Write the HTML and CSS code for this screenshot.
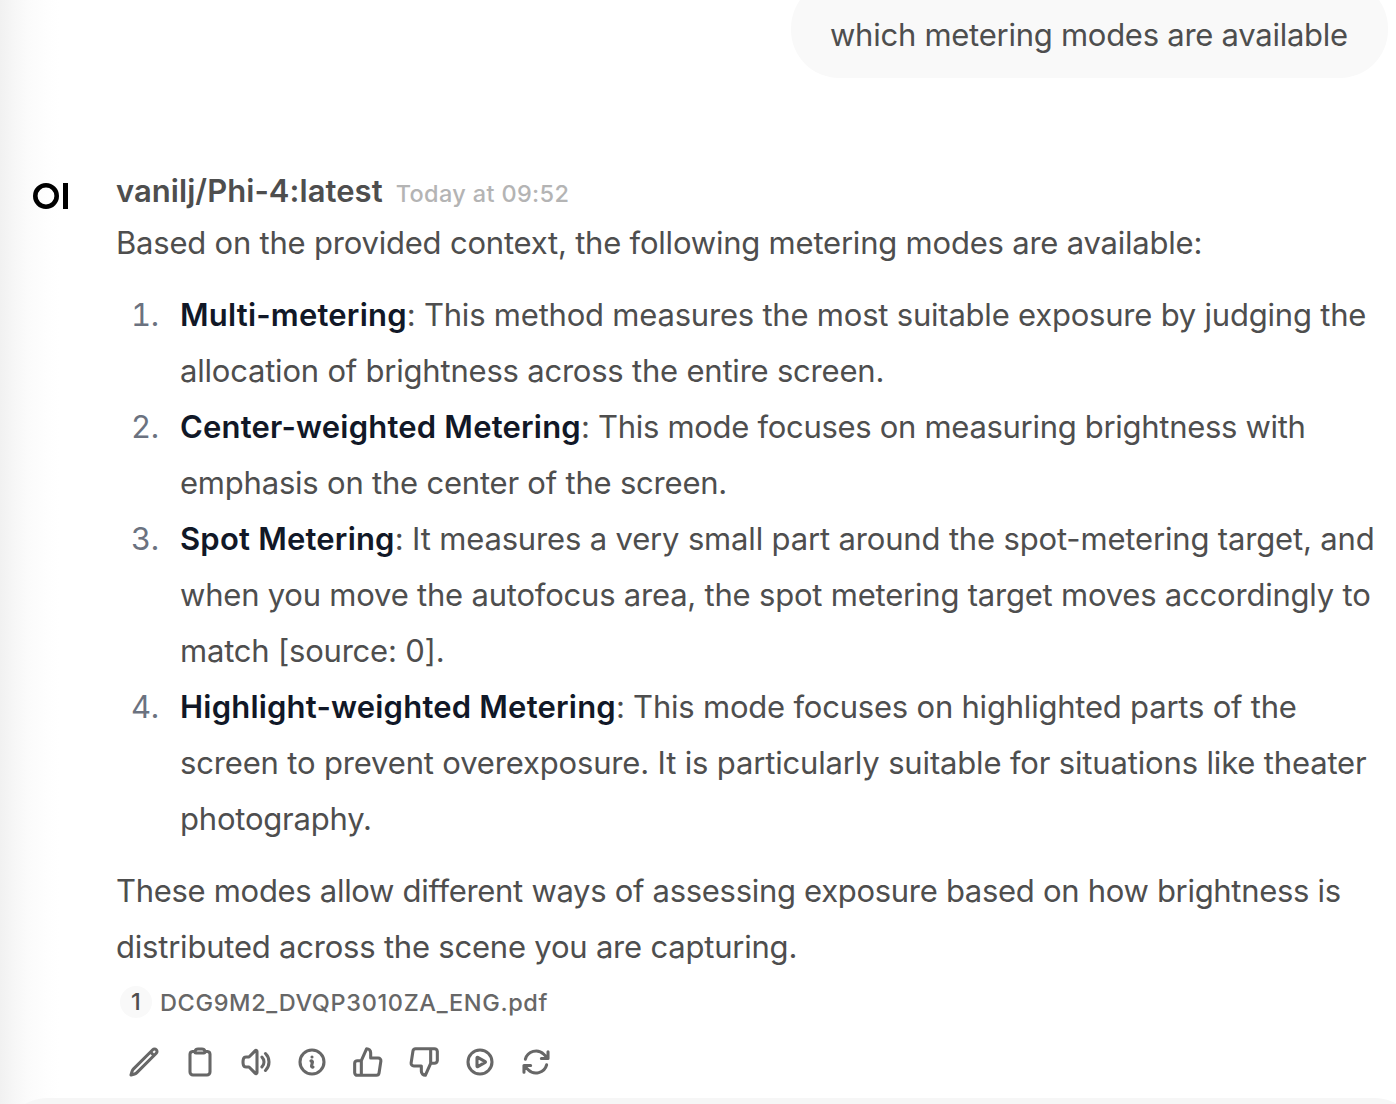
FILE: index.html
```
<!DOCTYPE html>
<html lang="en">
    <head>
        <meta charset="UTF-8">
        <meta name="viewport" content="width=device-width, initial-scale=1.0">
        <title>Chat</title>
        <link rel="stylesheet" href="styles.css">
    </head>

    <body>
        <div class="chat">
            <div class="user-message">
                <div class="bubble">which metering modes are available</div>
            </div>

            <div class="response">
                <svg class="avatar" viewBox="0 0 36 28">
                    <circle cx="13" cy="14" r="10.7" fill="none" stroke="#000" stroke-width="4.6"/>
                    <rect x="30" y="1" width="5" height="26"/>
                </svg>

                <div class="response-body">
                    <div class="response-header">
                        <span class="model-name">vanilj/Phi-4:latest</span>
                        <span class="time">Today at 09:52</span>
                    </div>

                    <div class="prose">
                        <p>Based on the provided context, the following metering modes are available:</p>
                        <ol>
                            <li><strong>Multi-metering</strong>: This method measures the most suitable exposure by judging the<br>allocation of brightness across the entire screen.</li>
                            <li><strong>Center-weighted Metering</strong><span class="tight">: This mode focuses on measuring brightness with</span><br>emphasis on the center of the screen.</li>
                            <li><strong>Spot Metering</strong><span class="loose">: It measures a very small part around the spot-metering target, and</span><br>when you move the autofocus area, the spot metering target moves accordingly to<br>match [source: 0].</li>
                            <li><strong>Highlight-weighted Metering</strong>: This mode focuses on highlighted parts of the<br><span class="loose">screen to prevent overexposure. It is particularly suitable for situations like theater</span><br>photography.</li>
                        </ol>
                        <p><span class="tight">These modes allow different ways of assessing exposure based on how brightness is</span><br>distributed across the scene you are capturing.</p>
                    </div>

                    <div class="citation">
                        <span class="citation-number">1</span>
                        <span class="citation-name">DCG9M2_DVQP3010ZA_ENG.pdf</span>
                    </div>

                    <div class="actions">
                        <!-- edit -->
                        <svg class="icon" viewBox="0 0 24 24"><path d="M16.862 4.487l1.687-1.688a1.875 1.875 0 112.652 2.652L6.832 19.82a4.5 4.5 0 01-1.897 1.13l-2.685.8.8-2.685a4.5 4.5 0 011.13-1.897L16.863 4.487zm0 0L19.5 7.125"/></svg>
                        <!-- copy -->
                        <svg class="icon" viewBox="0 0 24 24"><path d="M15.666 3.888A2.25 2.25 0 0013.5 2.25h-3c-1.03 0-1.9.693-2.166 1.638m7.332 0c.055.194.084.4.084.612v0a.75.75 0 01-.75.75H9a.75.75 0 01-.75-.75v0c0-.212.03-.418.084-.612m7.332 0c.646.049 1.288.11 1.927.184 1.1.128 1.907 1.077 1.907 2.185V19.5a2.25 2.25 0 01-2.25 2.25H6.75A2.25 2.25 0 014.5 19.5V6.257c0-1.108.806-2.057 1.907-2.185a48.208 48.208 0 011.927-.184"/></svg>
                        <!-- read aloud -->
                        <svg class="icon" viewBox="0 0 24 24"><path d="M19.114 5.636a9 9 0 010 12.728M16.463 8.288a5.25 5.25 0 010 7.424M6.75 8.25l4.72-4.72a.75.75 0 011.28.53v15.88a.75.75 0 01-1.28.53l-4.72-4.72H4.51c-.88 0-1.704-.507-1.938-1.354A9.01 9.01 0 012.25 12c0-.83.112-1.633.322-2.396C2.806 8.756 3.63 8.25 4.51 8.25H6.75z"/></svg>
                        <!-- info -->
                        <svg class="icon" viewBox="0 0 24 24"><path d="M11.25 11.25l.041-.02a.75.75 0 011.063.852l-.708 2.836a.75.75 0 001.063.853l.041-.021M21 12a9 9 0 11-18 0 9 9 0 0118 0zm-9-3.75h.008v.008H12V8.25z"/></svg>
                        <!-- good response -->
                        <svg class="icon" viewBox="0 0 24 24"><path d="M14 9V5a3 3 0 0 0-3-3l-4 9v11h11.28a2 2 0 0 0 2-1.7l1.38-9a2 2 0 0 0-2-2.3zM7 22H4a2 2 0 0 1-2-2v-7a2 2 0 0 1 2-2h3"/></svg>
                        <!-- bad response -->
                        <svg class="icon" viewBox="0 0 24 24"><path d="M10 15v4a3 3 0 0 0 3 3l4-9V2H5.72a2 2 0 0 0-2 1.7l-1.38 9a2 2 0 0 0 2 2.3zm7-13h2.67A2.31 2.31 0 0 1 22 4v7a2.31 2.31 0 0 1-2.33 2H17"/></svg>
                        <!-- continue -->
                        <svg class="icon" viewBox="0 0 24 24"><path d="M21 12a9 9 0 1 1-18 0 9 9 0 0 1 18 0Z"/><path d="M15.91 11.672a.375.375 0 0 1 0 .656l-5.603 3.113a.375.375 0 0 1-.557-.328V8.887c0-.286.307-.466.557-.327l5.603 3.112Z"/></svg>
                        <!-- regenerate -->
                        <svg class="icon" viewBox="0 0 24 24"><path d="M16.023 9.348h4.992v-.001M2.985 19.644v-4.992m0 0h4.992m-4.993 0l3.181 3.183a8.25 8.25 0 0013.803-3.7M4.031 9.865a8.25 8.25 0 0113.803-3.7l3.181 3.182m0-4.991v4.99"/></svg>
                    </div>
                </div>
            </div>

            <div class="message-input"></div>
        </div>
    </body>
</html>
```
FILE: styles.css
```
*{
    box-sizing: border-box;
}
body{
    margin: 0;
    background-color: #fff;
    color: #4e4e4e;
    font-family: Inter, "Liberation Sans", sans-serif;
    font-size: 31px;
}
.chat{
    display: flex;
    flex-direction: column;
    width: 1396px;
    height: 1104px;
    overflow: hidden;
    background-image: linear-gradient(to right, #f1f1f1 0, #f7f7f7 15px, #fbfbfb 28px, #fefefe 48px, #fff 60px);
}

.user-message{
    display: flex;
    flex: none;
    justify-content: flex-end;
    height: 78px;
    padding-right: 8px;
}
.bubble{
    width: 597px;
    height: 98px;
    margin-top: -20px;
    padding: 27px 0 0 39px;
    border-radius: 48px;
    background-color: #f9f9f9;
    line-height: 56px;
    letter-spacing: -0.26px;
    white-space: nowrap;
}

.response{
    display: flex;
    flex: none;
    height: 1020px;
    padding-top: 90px;
}
.avatar{
    flex: none;
    width: 36px;
    height: 28px;
    margin: 14px 47px 0 33px;
}
.response-body{
    flex: 1;
    white-space: nowrap;
}
.response-header{
    display: flex;
    align-items: baseline;
    gap: 13px;
    height: 47px;
    line-height: 46px;
}
.model-name{
    font-weight: 600;
    letter-spacing: 0.05px;
}
.time{
    font-size: 23.5px;
    font-weight: 500;
    letter-spacing: 0.35px;
    color: #b4b4b4;
}

.prose{
    line-height: 56px;
    letter-spacing: -0.21px;
}
.prose p{
    margin: 0;
}
.prose ol{
    margin: 16px 0;
    padding-left: 51px;
}
.prose li{
    padding-left: 13px;
}
.prose li::marker{
    color: #6b7280;
}
.prose strong{
    font-weight: 600;
    letter-spacing: 0.2px;
    color: #111827;
}
.tight{
    letter-spacing: -0.3px;
}
.loose{
    letter-spacing: -0.16px;
}

.citation{
    display: flex;
    align-items: center;
    gap: 8px;
    height: 32px;
    margin: 11px 0 0 4px;
    font-size: 23.5px;
    font-weight: 500;
    color: #676767;
}
.citation-number{
    width: 32px;
    border-radius: 50%;
    background-color: #f9f9f9;
    line-height: 32px;
    text-align: center;
    color: #4e4e4e;
}
.citation-name{
    letter-spacing: 0.64px;
}

.actions{
    display: flex;
    gap: 24px;
    margin: 28px 0 0 12px;
}
.icon{
    width: 32px;
    height: 32px;
    fill: none;
    stroke: #676767;
    stroke-width: 2.3;
    stroke-linecap: round;
    stroke-linejoin: round;
}

.message-input{
    flex: none;
    width: 1422px;
    height: 100px;
    border-radius: 48px;
    background-color: #f6f6f6;
}
```
